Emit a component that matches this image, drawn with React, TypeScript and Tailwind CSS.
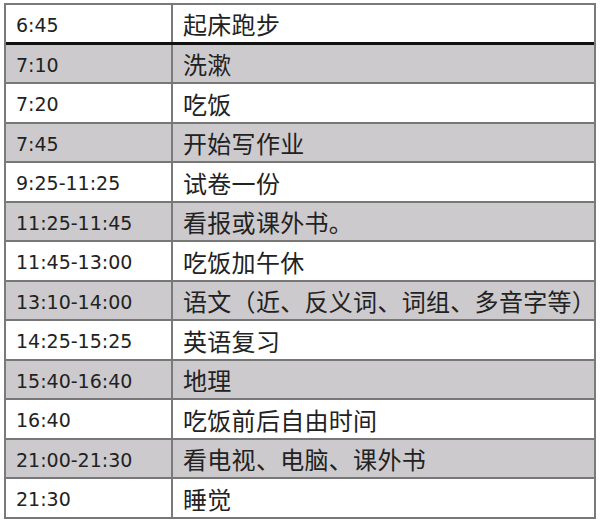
import React from 'react';

const rows: [string, string][] = [
  ['6:45', '起床跑步'],
  ['7:10', '洗漱'],
  ['7:20', '吃饭'],
  ['7:45', '开始写作业'],
  ['9:25-11:25', '试卷一份'],
  ['11:25-11:45', '看报或课外书。'],
  ['11:45-13:00', '吃饭加午休'],
  ['13:10-14:00', '语文（近、反义词、词组、多音字等）'],
  ['14:25-15:25', '英语复习'],
  ['15:40-16:40', '地理'],
  ['16:40', '吃饭前后自由时间'],
  ['21:00-21:30', '看电视、电脑、课外书'],
  ['21:30', '睡觉'],
];

const App: React.FC = () => {
  return (
    <div className="w-[600px] h-[520px] bg-white pt-[3px] pl-[4px]">
      <div className="w-[592px] border-t-2 border-l-2 border-r-2 border-[#7a7a7a] text-[#222]">
        {rows.map(([time, task], i) => (
          <div
            key={i}
            className={`flex h-[39.5px] ${
              i === 0 ? 'border-b-[3px] border-[#111]' : 'border-b-2 border-[#777]'
            } ${i % 2 === 1 ? 'bg-[#cccacd]' : 'bg-white'}`}
          >
            <div className="w-[167px] shrink-0 flex items-center pl-[10px] pt-[3px] border-r-2 border-[#7a7a7a] font-['DejaVu_Sans',sans-serif] text-[19px]">
              {time}
            </div>
            <div className="flex-1 flex items-center pl-[10px] pt-[2px] whitespace-nowrap font-['Noto_Sans_CJK_SC','Noto_Sans',sans-serif] text-[24px] tracking-[0.3px]">
              {task}
            </div>
          </div>
        ))}
      </div>
    </div>
  );
};

export default App;
